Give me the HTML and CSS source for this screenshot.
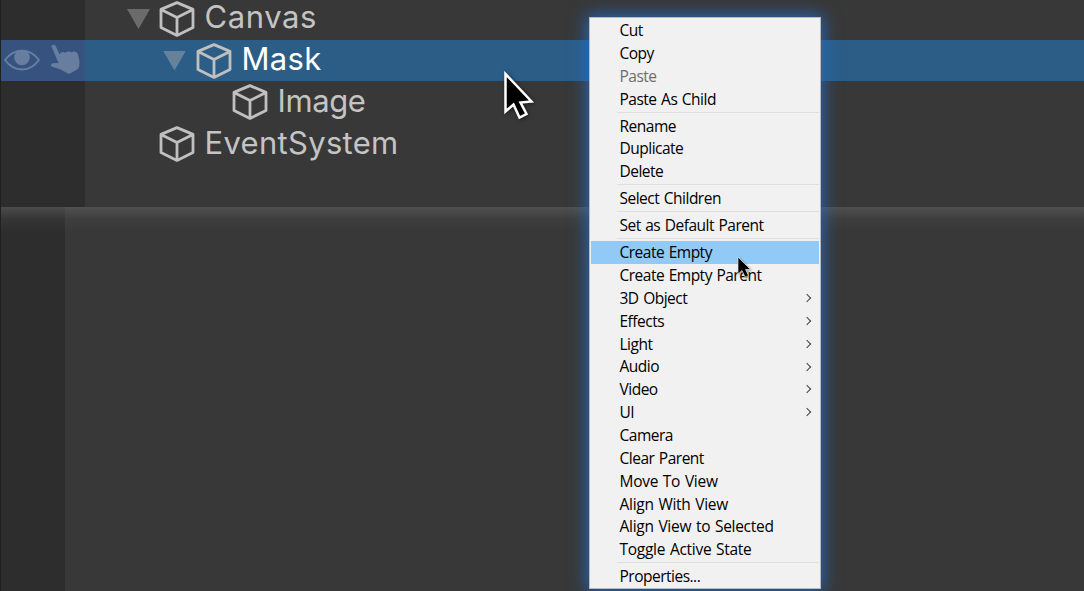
FILE: index.html
```html
<!DOCTYPE html>
<html lang="en">
<head>
<meta charset="utf-8">
<title>Hierarchy</title>
<link rel="stylesheet" href="styles.css">
</head>
<body>
<svg class="defs" aria-hidden="true">
  <symbol id="cube" viewBox="0 0 36 38"><path d="M18 2.6 34 9.4V27.4L18 35.4 2 27.4V9.4ZM2 9.4 18 17.6 34 9.4M18 17.6V35.4"/></symbol>
</svg>
<main class="screen">
  <section class="tree">
    <div class="row level-1"><span class="gutter"></span><i class="fold"></i><svg class="cube"><use href="#cube"/></svg><span class="name">Canvas</span></div>
    <div class="row level-2 selected"><span class="gutter">
      <svg class="eye" viewBox="0 0 38 24"><path d="M2 12C11-.5 27-.5 36 12 27 24.500 11 24.500 2 12Z"/><circle cx="19" cy="9.500" r="7.800"/></svg>
      <svg class="hand" viewBox="0 0 30 31"><path d="M1.500 2.500C2 .3 5 .2 5.800 2.300L9.500 10.500C11 7.500 14 7.500 15 9 17 7 20 7 21 8.500 24 6.500 27 7.500 27.700 10 29.500 16 30.500 20 28 25L19 30 10.500 25.500C7 23.500 4 24 1.500 22.500.3 21 1 19.500 3 19.300L8.500 19Z"/></svg>
    </span><i class="fold"></i><svg class="cube"><use href="#cube"/></svg><span class="name">Mask</span></div>
    <div class="row level-3"><span class="gutter"></span><svg class="cube"><use href="#cube"/></svg><span class="name">Image</span></div>
    <div class="row level-0"><span class="gutter"></span><svg class="cube"><use href="#cube"/></svg><span class="name">EventSystem</span></div>
    <div class="rest"><span class="gutter"></span></div>
  </section>
  <section class="lower"><div class="lower-gutter"></div></section>

  <svg class="pointer large" viewBox="0 0 32 50"><path d="M2.500 3V40.500L10.500 33.500 16.500 46.500 23.500 43 17.500 31.500 28.500 30.500Z"/></svg>

  <nav class="menu">
    <div class="item">Cut</div>
    <div class="item">Copy</div>
    <div class="item disabled">Paste</div>
    <div class="item">Paste As Child</div>
    <div class="separator"></div>
    <div class="item">Rename</div>
    <div class="item">Duplicate</div>
    <div class="item">Delete</div>
    <div class="separator"></div>
    <div class="item">Select Children</div>
    <div class="separator"></div>
    <div class="item">Set as Default Parent</div>
    <div class="separator"></div>
    <div class="item active">Create Empty</div>
    <div class="item">Create Empty Parent</div>
    <div class="item">3D Object<i class="arrow"></i></div>
    <div class="item">Effects<i class="arrow"></i></div>
    <div class="item">Light<i class="arrow"></i></div>
    <div class="item">Audio<i class="arrow"></i></div>
    <div class="item">Video<i class="arrow"></i></div>
    <div class="item">UI<i class="arrow"></i></div>
    <div class="item">Camera</div>
    <div class="item">Clear Parent</div>
    <div class="item loose">Move To View</div>
    <div class="item loose">Align With View</div>
    <div class="item loose">Align View to Selected</div>
    <div class="item loose">Toggle Active State</div>
    <div class="separator"></div>
    <div class="item">Properties...</div>
  </nav>
  <svg class="pointer small" viewBox="0 0 15 23"><path d="M1 1V18L5 14.500 8 21 11.500 19.500 8.500 13.500H13.500Z"/></svg>
</main>
</body>
</html>
```
FILE: styles.css
```css
* { box-sizing: border-box; }
body { margin: 0; background: #383838; }
.defs { display: none; }
.screen {
  position: relative;
  width: 1084px;
  height: 591px;
  overflow: hidden;
  background: #383838;
  font-family: "Open Sans", "Noto Sans", sans-serif;
}

/* Hierarchy */
.tree {
  display: flex;
  flex-direction: column;
  height: 207px;
  border-left: 1px solid #202020;
}
.row {
  display: flex;
  align-items: center;
  flex: none;
  height: 41.5px;
  color: #c4c4c4;
}
.row:first-child { height: 40px; }
.row:first-child > :not(.gutter) { margin-top: -2px; }
.gutter {
  display: flex;
  flex: none;
  align-self: stretch;
  width: 84px;
  background: #2d2d2d;
}
.rest { display: flex; flex: 1; }
.row.selected { height: 41px; background: #2c5d87; color: #fff; }
.selected .gutter { background: #36527e; }
.fold {
  flex: none;
  width: 23px;
  height: 20px;
  margin-right: 9px;
  background: #6b6b6b;
  clip-path: polygon(0 0, 100% 0, 50% 100%);
}
.selected .fold { margin-right: 10px; background: #66829a; }
.level-1 .fold { margin-left: 42px; }
.level-2 .fold { margin-left: 78px; }
.level-0 .cube { margin-left: 74px; }
.level-3 .cube { margin-left: 147px; }
.cube {
  flex: none;
  width: 36px;
  height: 38px;
  margin-right: 9.5px;
  fill: none;
  stroke: #c0c0c0;
  stroke-width: 2.8;
  stroke-linejoin: round;
}
.name {
  padding-bottom: 2px;
  font: 400 31px/34px Inter, sans-serif;
  letter-spacing: .3px;
}
.level-1 .name { padding-bottom: 4px; letter-spacing: .6px; }
.level-2 .name { padding-bottom: 4px; }
.level-3 .name { letter-spacing: -.4px; }
.level-0 .cube { margin-top: 1px; }
.level-0 .name { padding-bottom: 1px; }
.eye { width: 38px; height: 24px; margin: 8px 0 0 2px; fill: none; stroke: #687ea0; stroke-width: 2; }
.eye circle { fill: #687ea0; stroke: none; }
.hand { width: 30px; height: 31px; margin: 4px 0 0 9px; fill: #687ea0; }

/* Lower panel */
.lower {
  height: 384px;
  border-left: 1px solid #202020;
  background: linear-gradient(#505050, #3e3e3e 12px, #383838 25px);
}
.lower-gutter {
  width: 64px;
  height: 100%;
  background: linear-gradient(#4b4b4b, #353535 12px, #2d2d2d 25px);
}

/* Context menu */
.menu {
  position: absolute;
  left: 589px;
  top: 17px;
  width: 232px;
  height: 572px;
  padding: 1px;
  border: 1px solid #b8bcc2;
  background: #f1f1f1;
  box-shadow: 0 0 16px 2px rgba(36, 111, 200, .85);
}
.item {
  display: flex;
  align-items: center;
  justify-content: space-between;
  height: 22.850px;
  padding: .3px 9px 0 28.500px;
  color: #000;
  font-size: 15.5px;
  line-height: 21px;
  letter-spacing: -.5px;
  word-spacing: 1px;
  white-space: nowrap;
}
.disabled { color: #6d6d6d; }
.active { background: #91c9f7; }
.loose { letter-spacing: -.28px; }
.separator { height: 4.150px; margin-left: 26px; background: linear-gradient(#dedede, #dedede) 0 1.3px / 100% 1px no-repeat; }
.arrow {
  width: 6px;
  height: 6px;
  margin-bottom: .6px;
  border: solid #444;
  border-width: 1.2px 1.2px 0 0;
  transform: rotate(45deg);
}

/* Mouse pointers */
.pointer { position: absolute; fill: #000; stroke: #fff; }
.large { left: 503px; top: 71px; width: 32px; height: 50px; stroke-width: 2.5; filter: drop-shadow(1px 1px 2px rgba(0, 0, 0, .5)); }
.small { left: 737px; top: 256px; width: 15px; height: 23px; stroke-width: .6; filter: drop-shadow(1px 1px 1px rgba(0, 0, 0, .4)); }
```
